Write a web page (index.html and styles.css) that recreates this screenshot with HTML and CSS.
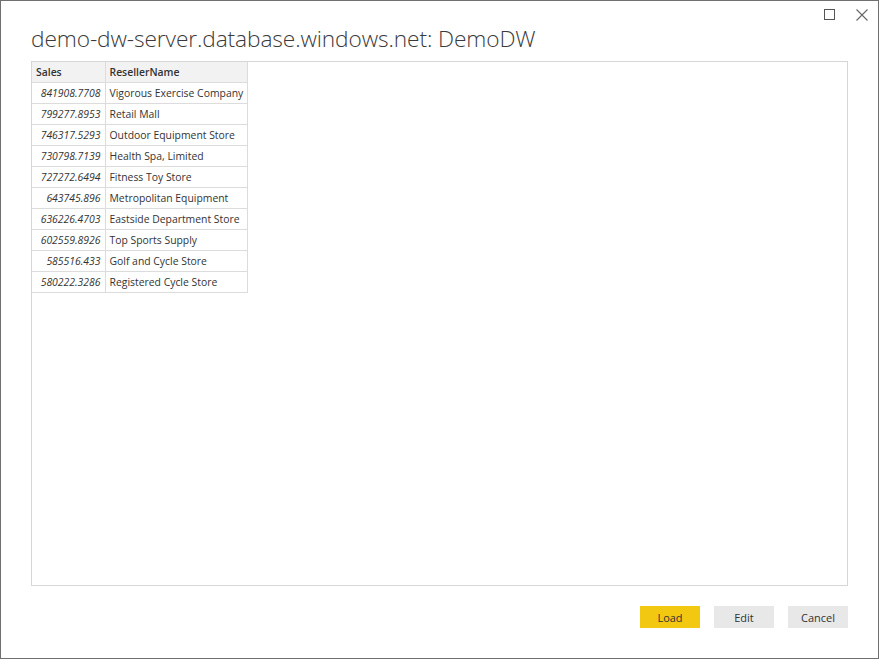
FILE: index.html
```html
<!DOCTYPE html>
<html>
<head>
<meta charset="utf-8">
<link rel="stylesheet" href="styles.css">
</head>
<body>
<div class="window">
  <div class="titlebar">
    <span class="ctl max"><svg width="11" height="11" viewBox="0 0 11 11"><rect x="0.5" y="0.5" width="10" height="10" fill="none" stroke="#555" stroke-width="1"/></svg></span>
    <span class="ctl close"><svg width="12" height="12" viewBox="0 0 12 12"><path d="M0.5 0.5 L11.5 11.5 M11.5 0.5 L0.5 11.5" stroke="#666" stroke-width="1.1"/></svg></span>
  </div>
  <h1 class="title">demo-dw-server.database.windows.net: DemoDW</h1>
  <div class="preview">
    <table class="grid">
      <thead>
        <tr><th class="c1">Sales</th><th class="c2">ResellerName</th></tr>
      </thead>
      <tbody>
        <tr><td class="num">841908.7708</td><td>Vigorous Exercise Company</td></tr>
        <tr><td class="num">799277.8953</td><td>Retail Mall</td></tr>
        <tr><td class="num">746317.5293</td><td>Outdoor Equipment Store</td></tr>
        <tr><td class="num">730798.7139</td><td>Health Spa, Limited</td></tr>
        <tr><td class="num">727272.6494</td><td>Fitness Toy Store</td></tr>
        <tr><td class="num">643745.896</td><td>Metropolitan Equipment</td></tr>
        <tr><td class="num">636226.4703</td><td>Eastside Department Store</td></tr>
        <tr><td class="num">602559.8926</td><td>Top Sports Supply</td></tr>
        <tr><td class="num">585516.433</td><td>Golf and Cycle Store</td></tr>
        <tr><td class="num">580222.3286</td><td>Registered Cycle Store</td></tr>
      </tbody>
    </table>
  </div>
  <div class="actions">
    <button class="btn primary">Load</button>
    <button class="btn">Edit</button>
    <button class="btn">Cancel</button>
  </div>
</div>
</body>
</html>
```
FILE: styles.css
```css
* { box-sizing: border-box; }
html, body { margin: 0; padding: 0; background: #fff; }
body { font-family: "Open Sans", "Noto Sans", sans-serif; color: #333; }
.window {
  width: 879px;
  height: 659px;
  border: 1px solid #707070;
  display: flex;
  flex-direction: column;
  padding: 0 30px 0 30px;
}
.titlebar {
  height: 20px;
  display: flex;
  justify-content: flex-end;
  align-items: flex-start;
  margin-right: -30px;
  padding-top: 8px;
}
.ctl { display: flex; }
.ctl.max { margin-right: 21px; }
.ctl.close { margin-right: 10px; }
.title {
  margin: 0;
  font-weight: 300;
  font-size: 22.7px;
  line-height: 30px;
  color: #3a3a3a;
  height: 40px;
  padding-top: 3px;
  letter-spacing: -0.1px;
}
.preview {
  margin-top: 0;
  height: 525px;
  border: 1px solid #d6d6d6;
}
.grid {
  border-collapse: collapse;
  font-size: 10.4px;
  color: #333;
}
.grid th, .grid td {
  border: 1px solid #dcdcdc;
  height: 21px;
  padding: 0 4px;
  white-space: nowrap;
}
.grid th { height: 20px; }
.grid tr:first-child th { border-top: none; }
.grid th:first-child, .grid td:first-child { border-left: none; }
.grid th {
  background: #f2f2f2;
  font-weight: 600;
  text-align: left;
  color: #333;
}
.grid th.c1 { width: 73px; }
.grid th.c2 { width: 142px; }
.grid td.num { font-style: italic; text-align: right; }
.actions {
  display: flex;
  justify-content: flex-end;
  gap: 14px;
  margin-top: 20px;
  padding-right: 0;
}
.btn {
  width: 60px;
  height: 22px;
  border: none;
  background: #e8e8e8;
  font-family: "Open Sans", "Noto Sans", sans-serif;
  font-size: 11px;
  color: #333;
  padding: 0;
}
.btn.primary { background: #f2c811; }
```
